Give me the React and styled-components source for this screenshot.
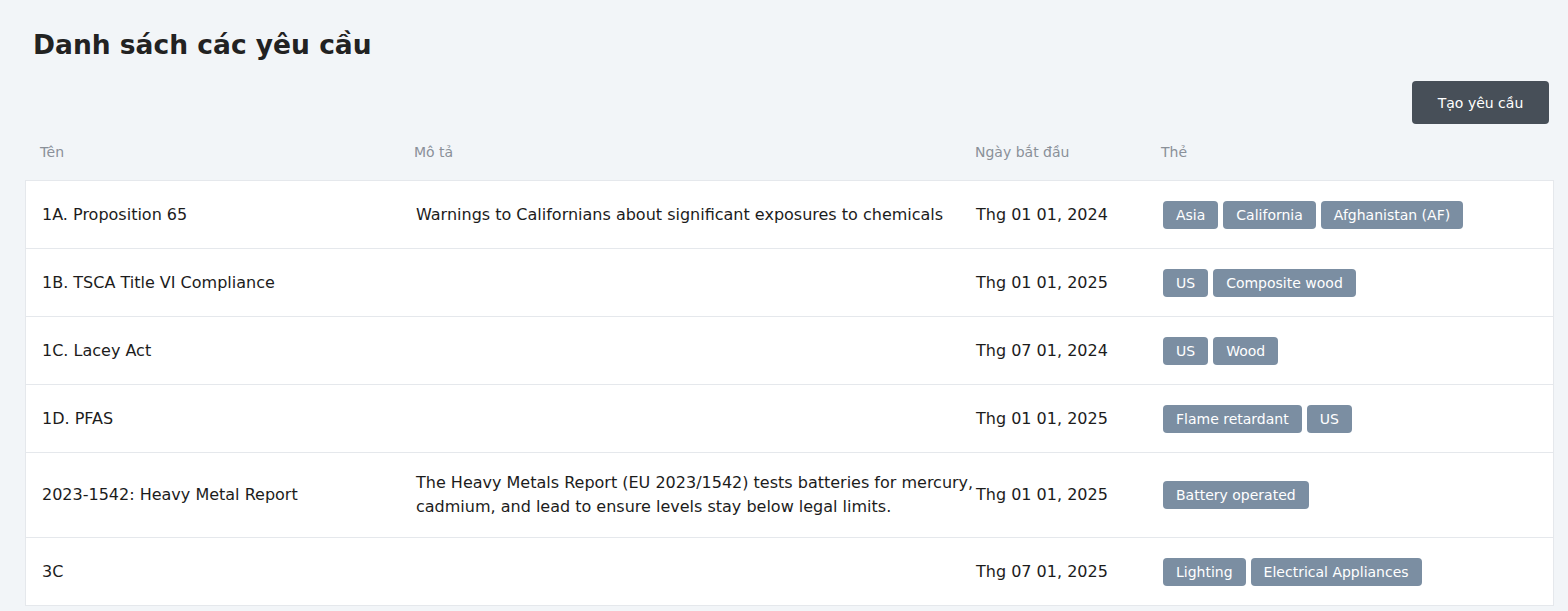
import React from 'react'
import styled, { createGlobalStyle } from 'styled-components'

const GlobalStyle = createGlobalStyle`
  body {
    margin: 0;
    background: #f2f5f8;
    font-family: "DejaVu Sans", "Noto Sans", sans-serif;
    color: #1c1c1c;
  }
`

const Page = styled.div`
  padding: 26px 14px 0 25px;
`

const Title = styled.h1`
  margin: 0 0 0 8px;
  font-size: 26.5px;
  line-height: 38px;
  font-weight: 600;
  color: #222;
`

const Toolbar = styled.div`
  display: flex;
  justify-content: flex-end;
  margin-top: 17px;
  padding-right: 5px;
`

const Button = styled.button`
  height: 43px;
  width: 137px;
  border: none;
  border-radius: 4px;
  background: #474f58;
  color: #fff;
  font-family: inherit;
  font-size: 14px;
  cursor: pointer;
`

const columns = '374px 576px 171px 1fr'

const HeadRow = styled.div`
  display: grid;
  grid-template-columns: ${columns};
  height: 56px;
  align-items: center;
  font-size: 14px;
  color: #8a9098;
`

const HeadCell = styled.div`
  padding-left: ${p => (p.$flush ? '0' : '15px')};
`

const Panel = styled.div`
  background: #fff;
  border: 1px solid #e5e8ec;
  border-bottom: none;
`

const Row = styled.div`
  display: grid;
  grid-template-columns: ${columns};
  align-items: center;
  min-height: 67px;
  border-bottom: 1px solid #e5e8ec;
  font-size: 16px;
  line-height: 24px;
`

const Cell = styled.div`
  padding: 18px 0 18px ${p => (p.$flush ? '0' : '16px')};
`

const Tags = styled.div`
  display: flex;
  gap: 5px;
  padding-left: 16px;
`

const Tag = styled.span`
  background: #7b8ea2;
  color: #fff;
  font-size: 14px;
  line-height: 28px;
  padding: 0 13px;
  border-radius: 4px;
`

const rows = [
  { name: '1A. Proposition 65', desc: 'Warnings to Californians about significant exposures to chemicals', date: 'Thg 01 01, 2024', tags: ['Asia', 'California', 'Afghanistan (AF)'] },
  { name: '1B. TSCA Title VI Compliance', desc: '', date: 'Thg 01 01, 2025', tags: ['US', 'Composite wood'] },
  { name: '1C. Lacey Act', desc: '', date: 'Thg 07 01, 2024', tags: ['US', 'Wood'] },
  { name: '1D. PFAS', desc: '', date: 'Thg 01 01, 2025', tags: ['Flame retardant', 'US'] },
  { name: '2023-1542: Heavy Metal Report', desc: 'The Heavy Metals Report (EU 2023/1542) tests batteries for mercury, cadmium, and lead to ensure levels stay below legal limits.', date: 'Thg 01 01, 2025', tags: ['Battery operated'] },
  { name: '3C', desc: '', date: 'Thg 07 01, 2025', tags: ['Lighting', 'Electrical Appliances'] },
]

const App = () => (
  <>
    <GlobalStyle />
    <Page>
      <Title>Danh sách các yêu cầu</Title>
      <Toolbar>
        <Button>Tạo yêu cầu</Button>
      </Toolbar>
      <HeadRow>
        <HeadCell>Tên</HeadCell>
        <HeadCell>Mô tả</HeadCell>
        <HeadCell $flush>Ngày bắt đầu</HeadCell>
        <HeadCell>Thẻ</HeadCell>
      </HeadRow>
      <Panel>
        {rows.map(r => (
          <Row key={r.name}>
            <Cell>{r.name}</Cell>
            <Cell>{r.desc}</Cell>
            <Cell $flush>{r.date}</Cell>
            <Tags>
              {r.tags.map(t => <Tag key={t}>{t}</Tag>)}
            </Tags>
          </Row>
        ))}
      </Panel>
    </Page>
  </>
)

export default App
